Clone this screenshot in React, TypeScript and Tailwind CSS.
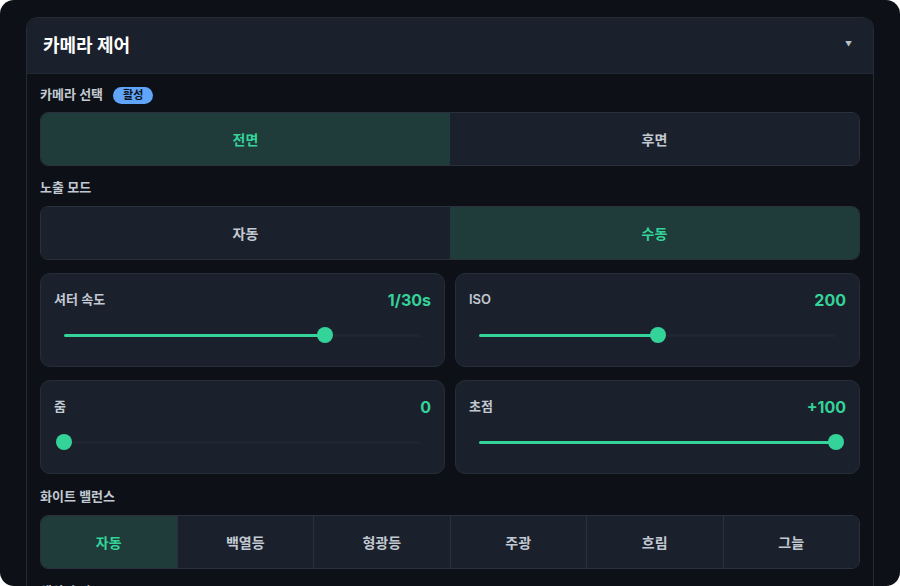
import React from "react";

const FONT = { fontFamily: "Inter, 'Noto Sans CJK KR', 'Noto Sans', sans-serif" };

function Segmented({ items, active, divided }: { items: string[]; active: number; divided?: boolean }) {
  return (
    <div className="flex h-[54px] rounded-[8px] border border-[#2a313c] overflow-hidden">
      {items.map((it, i) => (
        <div
          key={it}
          className={
            "flex-1 flex items-center justify-center text-[14px] font-bold " +
            (i === active ? "bg-[#1f3b3a] text-[#34d399] " : "bg-[#1b212c] text-[#c2c9d2] ") +
            (divided && i > 0 ? "border-l border-[#2a313c]" : "")
          }
        >
          {it}
        </div>
      ))}
    </div>
  );
}

function SliderCard({ label, value, pct }: { label: string; value: string; pct: number }) {
  return (
    <div className="h-[94px] rounded-[10px] border border-[#262d38] bg-[#1b212c] px-[13px] pt-[16px]">
      <div className="flex items-center justify-between h-[20px]">
        <span className="text-[13px] font-semibold text-[#c2c9d2]">{label}</span>
        <span className="text-[16px] font-bold text-[#34d399]">{value}</span>
      </div>
      <div className="mx-[10px] mt-[17px] relative h-[16px] flex items-center">
        <div className="w-full h-[3px] rounded-full bg-[#1f2631]">
          <div className="h-full rounded-full bg-[#34d399]" style={{ width: `${pct}%` }} />
        </div>
        <div
          className="absolute top-0 w-[16px] h-[16px] -ml-[8px] rounded-full bg-[#34d399]"
          style={{ left: `${pct}%` }}
        />
      </div>
    </div>
  );
}

function Label({ children }: { children: React.ReactNode }) {
  return <div className="h-[20px] flex items-center gap-[10px] text-[13px] font-semibold text-[#c2c9d2]">{children}</div>;
}

export default function App() {
  return (
    <div className="w-[900px] h-[586px] bg-white" style={FONT}>
      <div className="w-full h-full rounded-[14px] bg-[#0d1117] overflow-hidden pt-[17px] px-[26px]">
        <div className="h-[600px] rounded-t-[12px] border border-[#262c36] border-b-0">
          <div className="h-[56px] bg-[#1b212c] rounded-t-[12px] border-b border-[#222833] flex items-center justify-between pl-[16px] pr-[21px]">
            <span className="text-[18px] font-bold text-white">카메라 제어</span>
            <span className="text-[7px] text-[#b8c0ca]">▼</span>
          </div>
          <div className="px-[13px] pt-[11px]">
            <Label>
              카메라 선택
              <span className="h-[17px] px-[10px] rounded-full bg-[#60a5fa] text-[#0d1117] text-[11px] font-bold flex items-center">
                활성
              </span>
            </Label>
            <div className="mt-[7px]">
              <Segmented items={["전면", "후면"]} active={0} />
            </div>
            <div className="mt-[12px]">
              <Label>노출 모드</Label>
            </div>
            <div className="mt-[8px]">
              <Segmented items={["자동", "수동"]} active={1} />
            </div>
            <div className="mt-[13px] grid grid-cols-2 gap-x-[10px] gap-y-[13px]">
              <SliderCard label="셔터 속도" value="1/30s" pct={73} />
              <SliderCard label="ISO" value="200" pct={50} />
              <SliderCard label="줌" value="0" pct={0} />
              <SliderCard label="초점" value="+100" pct={100} />
            </div>
            <div className="mt-[13px]">
              <Label>화이트 밸런스</Label>
            </div>
            <div className="mt-[8px]">
              <Segmented items={["자동", "백열등", "형광등", "주광", "흐림", "그늘"]} active={0} divided />
            </div>
            <div className="mt-[13px]">
              <Label>색상 효과</Label>
            </div>
          </div>
        </div>
      </div>
    </div>
  );
}
